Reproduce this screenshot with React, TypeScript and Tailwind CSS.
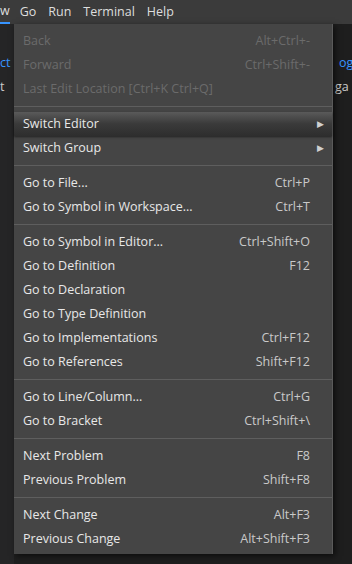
type Item = {
  label: string;
  shortcut?: string;
  disabled?: boolean;
  submenu?: boolean;
  active?: boolean;
};

const groups: Item[][] = [
  [
    { label: 'Back', shortcut: 'Alt+Ctrl+-', disabled: true },
    { label: 'Forward', shortcut: 'Ctrl+Shift+-', disabled: true },
    { label: 'Last Edit Location [Ctrl+K Ctrl+Q]', disabled: true },
  ],
  [
    { label: 'Switch Editor', submenu: true, active: true },
    { label: 'Switch Group', submenu: true },
  ],
  [
    { label: 'Go to File...', shortcut: 'Ctrl+P' },
    { label: 'Go to Symbol in Workspace...', shortcut: 'Ctrl+T' },
  ],
  [
    { label: 'Go to Symbol in Editor...', shortcut: 'Ctrl+Shift+O' },
    { label: 'Go to Definition', shortcut: 'F12' },
    { label: 'Go to Declaration' },
    { label: 'Go to Type Definition' },
    { label: 'Go to Implementations', shortcut: 'Ctrl+F12' },
    { label: 'Go to References', shortcut: 'Shift+F12' },
  ],
  [
    { label: 'Go to Line/Column...', shortcut: 'Ctrl+G' },
    { label: 'Go to Bracket', shortcut: 'Ctrl+Shift+\\' },
  ],
  [
    { label: 'Next Problem', shortcut: 'F8' },
    { label: 'Previous Problem', shortcut: 'Shift+F8' },
  ],
  [
    { label: 'Next Change', shortcut: 'Alt+F3' },
    { label: 'Previous Change', shortcut: 'Alt+Shift+F3' },
  ],
];

function MenuRow({ item }: { item: Item }) {
  const base = 'flex h-6 items-center pl-[9px] pr-[22px]';
  const bg = item.active
    ? 'bg-gradient-to-b from-[#5a5a5a] via-[#3a3a3a] to-[#2e2e2e] shadow-[0_1px_2px_rgba(0,0,0,0.5)]'
    : '';
  return (
    <div className={`${base} ${bg}`}>
      <span className={item.disabled ? 'text-[#6b6b6b]' : 'text-[#e8e8e8]'}>{item.label}</span>
      <span className="flex-1" />
      {item.shortcut && (
        <span className={item.disabled ? 'text-[#6b6b6b]' : 'text-[#c9c9c9]'}>{item.shortcut}</span>
      )}
      {item.submenu && <span className="-mr-[14px] text-[9px] text-[#d0d0d0]">▶</span>}
    </div>
  );
}

export default function App() {
  return (
    <div
      className="relative h-[564px] w-[352px] overflow-hidden bg-[#1e1e1e] text-[12.5px]"
      style={{ fontFamily: '"Open Sans", "DejaVu Sans", sans-serif' }}
    >
      {/* Menubar */}
      <div className="flex h-6 items-center gap-[12px] bg-[#3b3b3b] text-[12.5px] text-[#dedede]">
        <span className="-ml-[4px] border-b-2 border-[#3794ff] pl-[4px] leading-[22px]">w</span>
        <span className="-ml-[2px]">Go</span>
        <span>Run</span>
        <span>Terminal</span>
        <span>Help</span>
      </div>

      {/* Editor behind */}
      <div className="flex h-[540px] leading-6">
        <div className="w-[14px] overflow-hidden bg-[#252526] pt-[27px] text-[#3794ff]">
          <div className="whitespace-nowrap">ct</div>
          <div className="whitespace-nowrap text-[#cccccc]">t</div>
        </div>
        <div className="flex-1" />
        <div className="w-[19px] overflow-hidden pt-[27px] text-[#3794ff]">
          <div className="whitespace-nowrap pl-[6px]">og</div>
          <div className="whitespace-nowrap pl-[2px] text-[#cccccc]">ga</div>
        </div>
      </div>

      {/* Go menu */}
      <div className="absolute left-[14px] top-[24px] w-[319px] border-r border-[#5a5a5a] bg-[#454545] pb-[3px] pt-[5px] shadow-[2px_2px_6px_rgba(0,0,0,0.6)]">
        {groups.map((group, gi) => (
          <div key={gi}>
            {gi > 0 && <div className="my-[5px] h-px bg-[#5e5e5e]" />}
            {group.map((item) => (
              <MenuRow key={item.label} item={item} />
            ))}
          </div>
        ))}
      </div>
    </div>
  );
}
